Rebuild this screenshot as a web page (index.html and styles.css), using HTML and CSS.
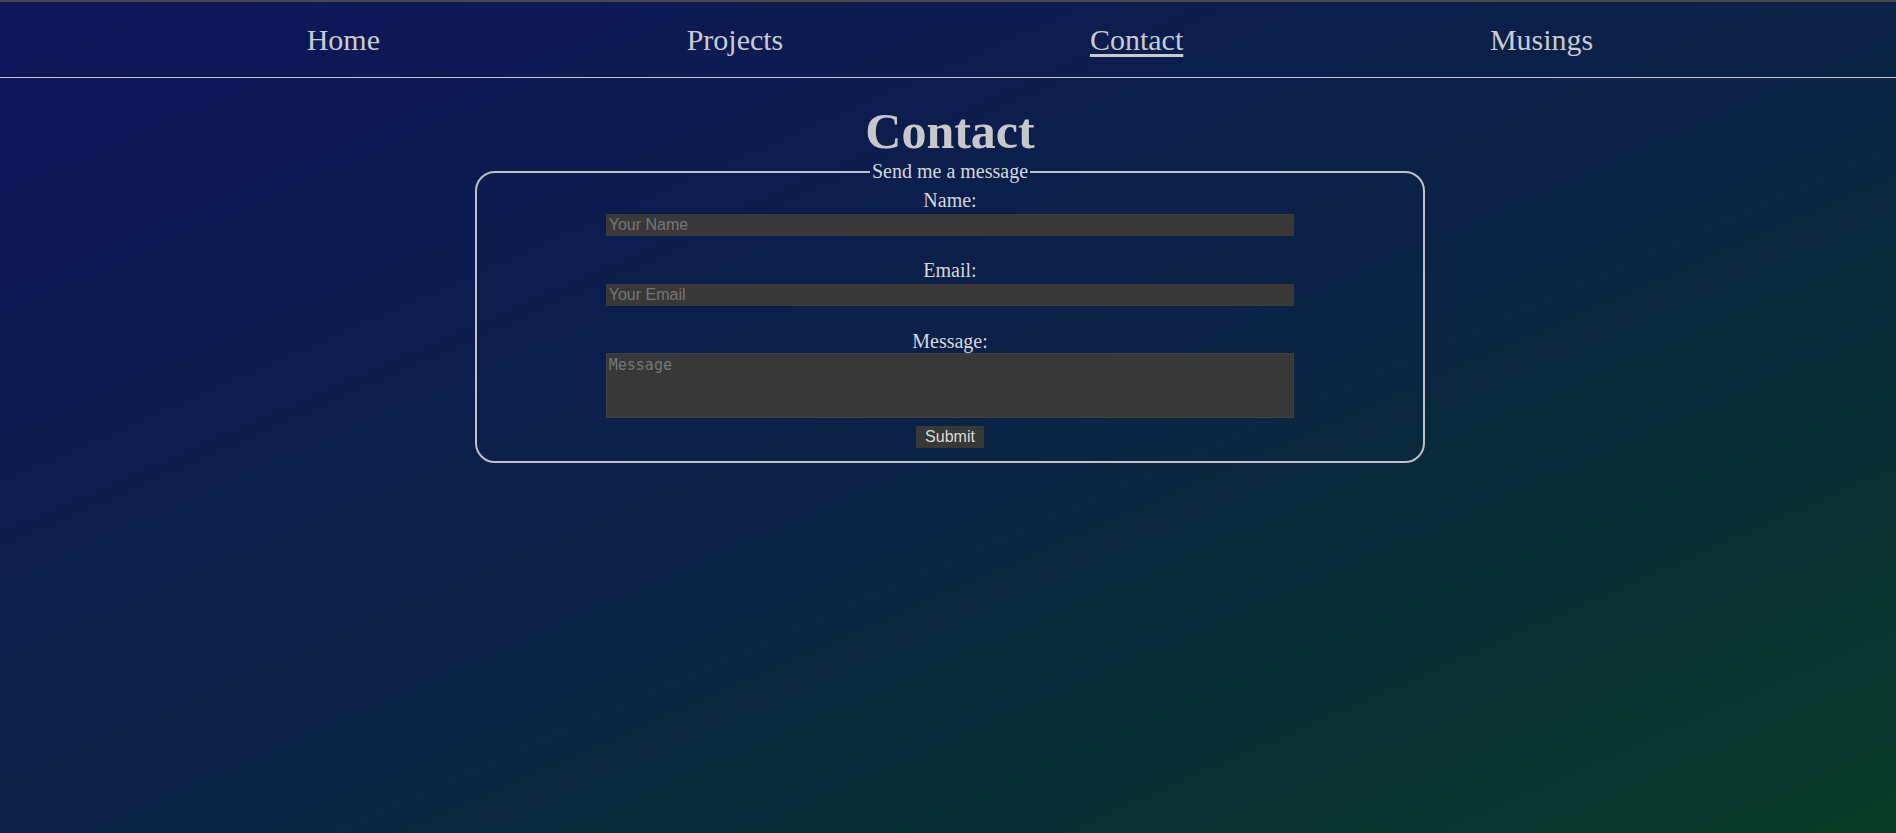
FILE: index.html
```html
<!DOCTYPE html>
<html lang="en">
<head>
<meta charset="utf-8">
<title>Contact</title>
<link rel="stylesheet" href="styles.css">
</head>
<body>
<nav class="site-nav">
  <a class="nav-link" href="#">Home</a>
  <a class="nav-link" href="#">Projects</a>
  <a class="nav-link nav-link--active" href="#">Contact</a>
  <a class="nav-link" href="#">Musings</a>
</nav>
<main class="page">
  <h1 class="page-title">Contact</h1>
  <form class="contact-form">
    <fieldset class="contact-fieldset">
      <legend class="contact-legend">Send me a message</legend>
      <div class="fields">
        <label class="field-label" for="name">Name:</label>
        <input class="field-input" id="name" type="text" placeholder="Your Name">
        <label class="field-label field-label--spaced" for="email">Email:</label>
        <input class="field-input" id="email" type="email" placeholder="Your Email">
        <label class="field-label field-label--message" for="message">Message:</label>
        <textarea class="field-textarea" id="message" placeholder="Message"></textarea>
        <button class="submit-button" type="submit">Submit</button>
      </div>
    </fieldset>
  </form>
</main>
</body>
</html>
```
FILE: styles.css
```css
html {
  height: 100%;
  overflow: hidden;
}

body {
  margin: 0;
  width: calc(100% + 4px);
  min-height: 100%;
  box-sizing: border-box;
  border-top: 2px solid #474747;
  background: linear-gradient(to bottom right, #0f155b 0%, #0b2246 50%, #083b26 100%);
  font-family: "Liberation Serif", "Times New Roman", serif;
  font-size: 20px;
  color: #cfcfd4;
}

.site-nav {
  display: flex;
  justify-content: space-evenly;
  padding: 21px 0 20px;
  border-bottom: 1px solid #c5c8d8;
}

.nav-link {
  font-size: 30px;
  line-height: normal;
  color: #c9cad2;
  text-decoration: none;
}

.nav-link--active {
  text-decoration: underline;
  text-decoration-thickness: 3px;
  text-underline-offset: 4px;
}

.page {
  display: block;
}

.page-title {
  margin: 24px 0 0;
  font-size: 50px;
  line-height: normal;
  font-weight: bold;
  text-align: center;
  color: #c8c8cc;
}

.contact-form {
  margin: 0;
}

.contact-fieldset {
  box-sizing: border-box;
  width: 50%;
  margin: 0 auto;
  padding: 6px 14px 13px;
  border: 2px solid #bfc1c9;
  border-radius: 20px;
}

.contact-legend {
  margin: 0 auto;
  padding: 0 2px;
  font-size: 20px;
  line-height: 23px;
  color: #d6d6dc;
}

.fields {
  display: flex;
  flex-direction: column;
  align-items: center;
}

.field-label {
  line-height: 23px;
  font-size: 20px;
  color: #d6d6dc;
}

.field-label--spaced {
  margin-top: 23px;
}

.field-label--message {
  margin-top: 24px;
}

.field-input {
  box-sizing: border-box;
  width: 75%;
  height: 22px;
  margin: 2px 0 0;
  padding: 1px 2px;
  border: 1px solid #3b3b3b;
  background: #383838;
  color: #dddddd;
  font-family: "Liberation Sans", Arial, sans-serif;
  font-size: 16px;
}

.field-input::placeholder {
  color: #767676;
}

.field-textarea {
  box-sizing: border-box;
  width: 75%;
  height: 65px;
  margin: 0;
  padding: 2px;
  border: 1px solid #404040;
  background: #383838;
  color: #dddddd;
  font-family: "DejaVu Sans Mono", "Liberation Mono", monospace;
  font-size: 15px;
  resize: none;
}

.field-textarea::placeholder {
  color: #767676;
}

.submit-button {
  box-sizing: border-box;
  height: 22px;
  margin-top: 8px;
  padding: 0 8px;
  border: 1px solid #383838;
  background: #383838;
  color: #dcdcdc;
  font-family: "Liberation Sans", Arial, sans-serif;
  font-size: 16px;
  line-height: 18px;
}
```
